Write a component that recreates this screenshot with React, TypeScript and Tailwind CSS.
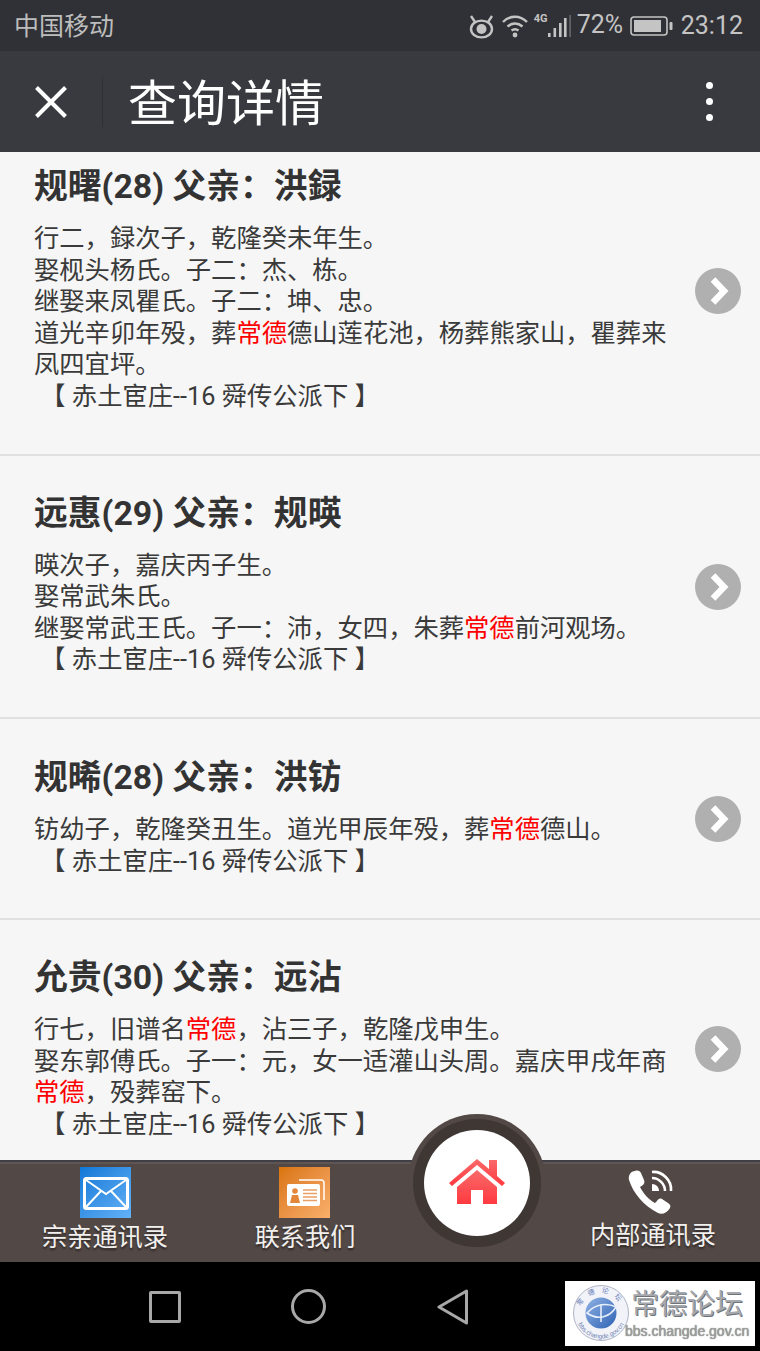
import React from "react";

const FONT = "font-['Roboto','Noto_Sans_CJK_SC',sans-serif]";

const Hl = () => <span className="text-[#ff0000]">常德</span>;

function Item({ title, children, pad, arrow, last }: { title: string; children: React.ReactNode; pad: string; arrow: string; last?: boolean }) {
  return (
    <div className={`flex items-center pl-[34px] ${pad} ${last ? "" : "border-b-[2px] border-[#e0e0e0]"}`}>
      <div className="w-[641px] shrink-0">
        <div className="h-[40px] text-[33.8px] leading-[40px] font-bold text-[#333333]">{title}</div>
        <div className="mt-[16px] text-[25.3px] leading-[31.6px] text-[#3a3a3a]">{children}</div>
      </div>
      <div className={`ml-[20px] flex h-[46px] w-[46px] items-center justify-center rounded-full bg-[#b0b0b0] ${arrow}`}>
        <svg width="24" height="30" viewBox="0 0 24 30" className="ml-[3px]">
          <path d="M5 3.5 L16 15 L5 26.5" fill="none" stroke="#ffffff" strokeWidth="6.5" />
        </svg>
      </div>
    </div>
  );
}

const Source = () => <div>&nbsp;【 赤土宦庄--16 舜传公派下 】</div>;

function StatusIcons() {
  return (
    <>
      <svg width="27" height="24" viewBox="0 0 27 24" className="mr-[6px] mt-[2px]">
        <g fill="none" stroke="#c4c4c4" strokeWidth="2.4">
          <ellipse cx="13.5" cy="14" rx="10.5" ry="8.4" />
          <path d="M3 1 L7 7 M24 1 L20 7" />
        </g>
        <circle cx="13.5" cy="14" r="5" fill="#c4c4c4" />
      </svg>
      <svg width="28" height="24" viewBox="0 0 28 24" className="mr-[5px]">
        <g fill="none" stroke="#c4c4c4" strokeWidth="2.4">
          <path d="M2 8 C9 1 19 1 26 8" />
          <path d="M6.5 12.5 C11 8.5 17 8.5 21.5 12.5" />
          <path d="M10.5 16.5 C12.5 15 15.5 15 17.5 16.5" />
        </g>
        <circle cx="14" cy="21" r="2.4" fill="#c4c4c4" />
      </svg>
      <div className="relative mr-[5px] h-[22px] w-[38px]">
        <span className="absolute left-0 top-[-3px] text-[11px] font-bold leading-[14px] text-[#c4c4c4]">4G</span>
        <svg width="38" height="22" viewBox="0 0 38 22" className="absolute left-0 top-0">
          <rect x="14" y="18" width="2.6" height="4" fill="#c4c4c4" />
          <rect x="19.5" y="13" width="2.6" height="9" fill="#c4c4c4" />
          <rect x="25" y="8" width="2.6" height="14" fill="#c4c4c4" />
          <rect x="30" y="3" width="2.6" height="19" fill="#c4c4c4" />
          <rect x="35.5" y="0" width="1.2" height="22" fill="#77787b" />
        </svg>
      </div>
      <span className="mt-[-1px] mr-[7px] w-[46px] text-[25px] whitespace-nowrap text-[#c4c4c4]">72%</span>
      <svg width="44" height="20" viewBox="0 0 44 20" className="mr-[7px]">
        <rect x="1" y="1" width="36" height="18" rx="3" fill="none" stroke="#c4c4c4" strokeWidth="1.6" />
        <rect x="4" y="4" width="27" height="12" fill="#c4c4c4" />
        <rect x="39.5" y="6" width="3" height="8" rx="1" fill="#c4c4c4" />
      </svg>
      <span className="mt-[1px] text-[25px] text-[#c4c4c4]">23:12</span>
    </>
  );
}

function Seal() {
  return (
    <svg width="58" height="58" viewBox="0 0 58 58" className="shrink-0">
      <defs>
        <linearGradient id="sealG" x1="0" y1="0" x2="1" y2="1">
          <stop offset="0" stopColor="#8fb2e4" />
          <stop offset="1" stopColor="#2f62b4" />
        </linearGradient>
        <path id="sealTop" d="M7 31 A22 22 0 0 1 51 31" />
        <path id="sealBot" d="M3.5 29 A25.5 25.5 0 0 0 54.5 29" />
      </defs>
      <circle cx="29" cy="29" r="27.5" fill="#f1f3f8" stroke="#aeb4c6" strokeWidth="1" />
      <circle cx="29" cy="29" r="15.5" fill="url(#sealG)" />
      <path d="M15 29 C24 19 36 19 44 23 C38 33 26 37 15 29 Z M29 20 L29 38" fill="none" stroke="#e6eefb" strokeWidth="1.6" />
      <text fontSize="7" fill="#6a80bb" fontFamily="'Noto Sans CJK SC',sans-serif">
        <textPath href="#sealTop" startOffset="50%" textAnchor="middle" letterSpacing="6">常德论坛</textPath>
      </text>
      <text fontSize="6.4" fill="#7284b4" fontFamily="'Liberation Sans',sans-serif">
        <textPath href="#sealBot" startOffset="50%" textAnchor="middle">bbs.changde.gov.cn</textPath>
      </text>
    </svg>
  );
}

export default function App() {
  return (
    <div className={`flex h-[1351px] w-[760px] flex-col overflow-hidden bg-black ${FONT}`}>
      <div className="flex h-[51px] shrink-0 items-center bg-[#303136] pl-[14px] pr-[17px]">
        <span className="mt-[3px] text-[25px] text-[#bdbdbd]">中国移动</span>
        <div className="ml-auto flex items-center">
          <StatusIcons />
        </div>
      </div>

      <div className="flex h-[101px] shrink-0 items-center bg-[#393a3f] pl-[35px]">
        <svg width="32" height="32" viewBox="0 0 32 32" className="shrink-0">
          <path d="M1.5 1.5 L30.5 30.5 M30.5 1.5 L1.5 30.5" stroke="#ffffff" strokeWidth="4" fill="none" />
        </svg>
        <div className="ml-[35px] h-[50px] w-px bg-[#2f3034]" />
        <span className="ml-[25px] mt-[6px] text-[49px] leading-none text-white">查询详情</span>
        <div className="ml-auto mr-[47px] flex flex-col gap-[9px]">
          <div className="h-[7px] w-[7px] rounded-full bg-white" />
          <div className="h-[7px] w-[7px] rounded-full bg-white" />
          <div className="h-[7px] w-[7px] rounded-full bg-white" />
        </div>
      </div>

      <div className="min-h-0 flex-1 overflow-hidden bg-[#f6f6f6]">
        <div className="mt-[-22px]">
          <Item pad="pt-[37px] pb-[41px]" arrow="mt-[2px]" title="规曙(28) 父亲：洪録">
            <div>行二，録次子，乾隆癸未年生。</div>
            <div>娶枧头杨氏。子二：杰、栋。</div>
            <div>继娶来凤瞿氏。子二：坤、忠。</div>
            <div>道光辛卯年殁，葬<Hl />德山莲花池，杨葬熊家山，瞿葬来凤四宜坪。</div>
            <Source />
          </Item>
          <Item pad="pt-[38px] pb-[41px]" arrow="mt-[4px]" title="远惠(29) 父亲：规暎">
            <div>暎次子，嘉庆丙子生。</div>
            <div>娶常武朱氏。</div>
            <div>继娶常武王氏。子一：沛，女四，朱葬<Hl />前河观场。</div>
            <Source />
          </Item>
          <Item pad="pt-[39px] pb-[41px]" arrow="mt-[3px]" title="规晞(28) 父亲：洪钫">
            <div>钫幼子，乾隆癸丑生。道光甲辰年殁，葬<Hl />德山。</div>
            <Source />
          </Item>
          <Item last pad="pt-[38px] pb-[42px]" arrow="" title="允贵(30) 父亲：远沾">
            <div>行七，旧谱名<Hl />，沾三子，乾隆戊申生。</div>
            <div>娶东郭傅氏。子一：元，女一适灌山头周。嘉庆甲戌年商<Hl />，殁葬窑下。</div>
            <Source />
          </Item>
        </div>
      </div>

      <div className="relative flex h-[102px] shrink-0 border-t-[2px] border-[#3f3f45] bg-[#524845] text-[25.2px] leading-[30px] text-[#f2f0ee] shadow-[inset_0_2px_0_#5f5653] [text-shadow:0_2px_2px_rgba(0,0,0,0.45)]">
        <div className="flex w-[210px] flex-col items-center pt-[5px]">
          <div className="h-[51px] w-[51px] bg-gradient-to-br from-[#0b78d6] to-[#62b2f7] pt-[10px] pl-[3px]">
            <svg width="46" height="33" viewBox="0 0 46 33">
              <rect x="1.5" y="1.5" width="43" height="30" rx="2" fill="none" stroke="#ffffff" strokeWidth="3" />
              <path d="M3 3 L23 17 L43 3 M3 30 L18 14 M43 30 L28 14" fill="none" stroke="#ffffff" strokeWidth="2" />
            </svg>
          </div>
          <span className="mt-[5px]">宗亲通讯录</span>
        </div>
        <div className="flex w-[190px] flex-col items-center pt-[5px]">
          <div className="mr-[2px] h-[51px] w-[51px] bg-gradient-to-br from-[#d97405] to-[#fab06b] pt-[12px] pl-[7px]">
            <svg width="40" height="28" viewBox="0 0 40 28">
              <path d="M13 1 H35 Q38 1 38 4 V21" fill="none" stroke="#ffffff" strokeWidth="1.5" />
              <rect x="1" y="5" width="33" height="22" rx="2" fill="#ffffff" />
              <circle cx="9" cy="12" r="2.8" fill="#e4863a" />
              <path d="M4 24 L6 16 H12 L14 24 Z" fill="#e4863a" />
              <path d="M17 11 H31 M17 14.5 H31 M17 18 H31 M17 21.5 H31" stroke="#e9a066" strokeWidth="1.4" />
            </svg>
          </div>
          <span className="mt-[5px]">联系我们</span>
        </div>
        <div className="flex-1" />
        <div className="flex w-[214px] flex-col items-center pt-[8px]">
          <svg width="48" height="46" viewBox="0 0 48 46" className="ml-[-4px] mt-[-1px] mb-[1px]">
            <path d="M8 2 C4 2 1 6 2 11 C6 24 17 37 31 44 C35 46 40 44 43 39 C44 37 43 35 41 34 L35 30 C33 29 31 30 30 32 L28 34 C22 31 16 24 13 18 L16 16 C17 15 18 13 17 11 L14 4 C13 2 11 1 8 2 Z" fill="#ffffff" />
            <g fill="none" stroke="#ffffff" strokeWidth="2.6">
              <path d="M25 3 C35 2 45 11 44 22" />
              <path d="M25 9 C32 9 38 15 38 22" />
            </g>
            <path d="M25 15 C29 15 32 18 32 22 L25 22 Z" fill="#ffffff" />
          </svg>
          <span className="mt-[5px]">内部通讯录</span>
        </div>

        <div className="absolute left-[408px] top-[-48px] flex h-[138px] w-[138px] items-center justify-center rounded-full bg-[#524845]">
          <div className="flex h-[128px] w-[128px] items-center justify-center rounded-full bg-[#3f3734]">
            <div className="flex h-[106px] w-[106px] items-center justify-center rounded-full bg-white">
              <svg width="58" height="46" viewBox="0 0 58 46" className="mt-[-4px]">
                <defs>
                  <linearGradient id="homeG" x1="0" y1="0" x2="0" y2="1">
                    <stop offset="0" stopColor="#f96a6a" />
                    <stop offset="1" stopColor="#ff3a40" />
                  </linearGradient>
                </defs>
                <path d="M1 25 L29 1 L41 11 V2 H49 V18 L57 25 L54 28 L29 7 L4 28 Z" fill="url(#homeG)" />
                <path d="M9 29 L29 12 L49 29 V46 H35 V32 H23 V46 H9 Z" fill="url(#homeG)" />
              </svg>
            </div>
          </div>
        </div>
      </div>

      <div className="relative flex h-[89px] shrink-0 items-center bg-black">
        <div className="ml-[149px] h-[32px] w-[32px] rounded-[2px] border-[3px] border-[#a8a8a8]" />
        <div className="ml-[110px] h-[35px] w-[35px] rounded-full border-[3px] border-[#a8a8a8]" />
        <svg width="32" height="36" viewBox="0 0 32 36" className="ml-[111px]">
          <path d="M29.5 2 V34 L2 18 Z" fill="none" stroke="#a8a8a8" strokeWidth="3" strokeLinejoin="round" />
        </svg>
        <div className="absolute left-[565px] top-[19px] flex h-[65px] w-[190px] bg-white pl-[7px] pt-[3px]">
          <Seal />
          <div className="ml-[-5px] flex flex-col whitespace-nowrap">
            <span className="ml-[6px] text-[28px] leading-[36px] text-[#a5a8ad] [text-shadow:1px_1px_0_#6f7378] font-['Noto_Sans_CJK_SC',serif]">常德论坛</span>
            <span className="mt-[3px] text-[14px] leading-[16px] text-[#a0a0a0] [text-shadow:0_0_1px_#555555] font-['Liberation_Sans',sans-serif]">bbs.changde.gov.cn</span>
          </div>
        </div>
      </div>
    </div>
  );
}
